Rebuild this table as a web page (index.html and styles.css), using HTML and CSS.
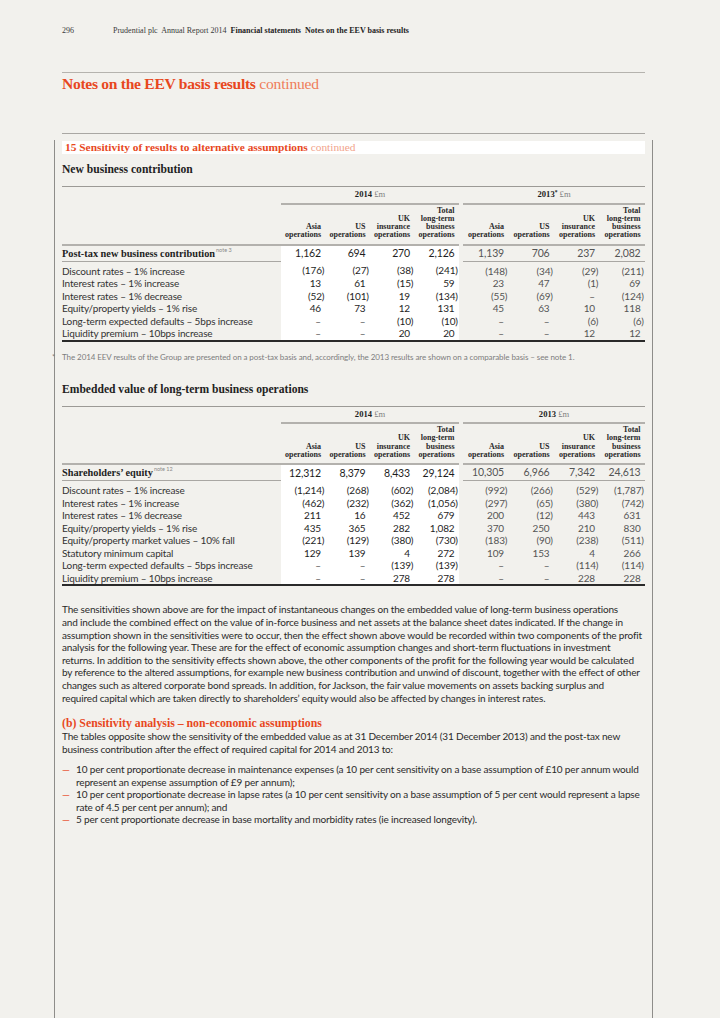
FILE: index.html
```html
<!DOCTYPE html>
<html lang="en">
<head>
<meta charset="utf-8">
<title>Notes on the EEV basis results continued</title>
<link rel="stylesheet" href="styles.css">
</head>
<body>
<div class="page">
  <div class="running-head">
    <span class="folio">296</span>
    <span class="rh-text">Prudential plc&nbsp; Annual Report 2014&nbsp; <b>Financial statements&nbsp; Notes on the EEV basis results</b></span>
  </div>
  <div class="rule-top"></div>
  <h1 class="page-title">Notes on the EEV basis results <span class="cont">continued</span></h1>
  <div class="section-rule"></div>

  <div class="section">
    <div class="sec-head">15&nbsp;Sensitivity of results to alternative assumptions <span class="cont">continued</span></div>

    <h2 class="tbl-title">New business contribution</h2>
    <table class="eev">
      <colgroup>
        <col class="lab"><col class="c14"><col class="c14"><col class="c14"><col class="c14"><col class="gap"><col class="c13"><col class="c13"><col class="c13"><col class="c13">
      </colgroup>
      <thead>
        <tr class="yr">
          <td></td>
          <td class="y" colspan="4"><b>2014</b> <span class="u">£m</span></td>
          <td class="gap"></td>
          <td class="y" colspan="4"><b>2013<sup class="ast">*</sup></b> <span class="u">£m</span></td>
        </tr>
        <tr class="hd">
          <th></th>
          <th>Asia<br>operations</th>
          <th>US<br>operations</th>
          <th>UK<br>insurance<br>operations</th>
          <th>Total<br>long-term<br>business<br>operations</th>
          <th class="gap"></th>
          <th>Asia<br>operations</th>
          <th>US<br>operations</th>
          <th>UK<br>insurance<br>operations</th>
          <th>Total<br>long-term<br>business<br>operations</th>
        </tr>
      </thead>
      <tbody>
        <tr class="main">
          <td class="l">Post-tax new business contribution<sup class="note">note 3</sup></td>
          <td>1,162</td><td>694</td><td>270</td><td>2,126</td><td class="gap"></td>
          <td>1,139</td><td>706</td><td>237</td><td>2,082</td>
        </tr>
        <tr class="first">
          <td class="l">Discount rates – 1% increase</td>
          <td class="n">(176)</td><td class="n">(27)</td><td class="n">(38)</td><td class="n">(241)</td><td class="gap"></td>
          <td class="n">(148)</td><td class="n">(34)</td><td class="n">(29)</td><td class="n">(211)</td>
        </tr>
        <tr>
          <td class="l">Interest rates – 1% increase</td>
          <td>13</td><td>61</td><td class="n">(15)</td><td>59</td><td class="gap"></td>
          <td>23</td><td>47</td><td class="n">(1)</td><td>69</td>
        </tr>
        <tr>
          <td class="l">Interest rates – 1% decrease</td>
          <td class="n">(52)</td><td class="n">(101)</td><td>19</td><td class="n">(134)</td><td class="gap"></td>
          <td class="n">(55)</td><td class="n">(69)</td><td class="d">–</td><td class="n">(124)</td>
        </tr>
        <tr>
          <td class="l">Equity/property yields – 1% rise</td>
          <td>46</td><td>73</td><td>12</td><td>131</td><td class="gap"></td>
          <td>45</td><td>63</td><td>10</td><td>118</td>
        </tr>
        <tr>
          <td class="l">Long-term expected defaults – 5bps increase</td>
          <td class="d">–</td><td class="d">–</td><td class="n">(10)</td><td class="n">(10)</td><td class="gap"></td>
          <td class="d">–</td><td class="d">–</td><td class="n">(6)</td><td class="n">(6)</td>
        </tr>
        <tr>
          <td class="l">Liquidity premium – 10bps increase</td>
          <td class="d">–</td><td class="d">–</td><td>20</td><td>20</td><td class="gap"></td>
          <td class="d">–</td><td class="d">–</td><td>12</td><td>12</td>
        </tr>
      </tbody>
    </table>

    <p class="footnote"><span class="fn-mark">*</span>The 2014 EEV results of the Group are presented on a post-tax basis and, accordingly, the 2013 results are shown on a comparable basis – see note 1.</p>

    <h2 class="tbl-title t2">Embedded value of long-term business operations</h2>
    <table class="eev">
      <colgroup>
        <col class="lab"><col class="c14"><col class="c14"><col class="c14"><col class="c14"><col class="gap"><col class="c13"><col class="c13"><col class="c13"><col class="c13">
      </colgroup>
      <thead>
        <tr class="yr">
          <td></td>
          <td class="y" colspan="4"><b>2014</b> <span class="u">£m</span></td>
          <td class="gap"></td>
          <td class="y" colspan="4"><b>2013</b> <span class="u">£m</span></td>
        </tr>
        <tr class="hd">
          <th></th>
          <th>Asia<br>operations</th>
          <th>US<br>operations</th>
          <th>UK<br>insurance<br>operations</th>
          <th>Total<br>long-term<br>business<br>operations</th>
          <th class="gap"></th>
          <th>Asia<br>operations</th>
          <th>US<br>operations</th>
          <th>UK<br>insurance<br>operations</th>
          <th>Total<br>long-term<br>business<br>operations</th>
        </tr>
      </thead>
      <tbody>
        <tr class="main">
          <td class="l">Shareholders’ equity<sup class="note">note 12</sup></td>
          <td>12,312</td><td>8,379</td><td>8,433</td><td>29,124</td><td class="gap"></td>
          <td>10,305</td><td>6,966</td><td>7,342</td><td>24,613</td>
        </tr>
        <tr class="first">
          <td class="l">Discount rates – 1% increase</td>
          <td class="n">(1,214)</td><td class="n">(268)</td><td class="n">(602)</td><td class="n">(2,084)</td><td class="gap"></td>
          <td class="n">(992)</td><td class="n">(266)</td><td class="n">(529)</td><td class="n">(1,787)</td>
        </tr>
        <tr>
          <td class="l">Interest rates – 1% increase</td>
          <td class="n">(462)</td><td class="n">(232)</td><td class="n">(362)</td><td class="n">(1,056)</td><td class="gap"></td>
          <td class="n">(297)</td><td class="n">(65)</td><td class="n">(380)</td><td class="n">(742)</td>
        </tr>
        <tr>
          <td class="l">Interest rates – 1% decrease</td>
          <td>211</td><td>16</td><td>452</td><td>679</td><td class="gap"></td>
          <td>200</td><td class="n">(12)</td><td>443</td><td>631</td>
        </tr>
        <tr>
          <td class="l">Equity/property yields – 1% rise</td>
          <td>435</td><td>365</td><td>282</td><td>1,082</td><td class="gap"></td>
          <td>370</td><td>250</td><td>210</td><td>830</td>
        </tr>
        <tr>
          <td class="l">Equity/property market values – 10% fall</td>
          <td class="n">(221)</td><td class="n">(129)</td><td class="n">(380)</td><td class="n">(730)</td><td class="gap"></td>
          <td class="n">(183)</td><td class="n">(90)</td><td class="n">(238)</td><td class="n">(511)</td>
        </tr>
        <tr>
          <td class="l">Statutory minimum capital</td>
          <td>129</td><td>139</td><td>4</td><td>272</td><td class="gap"></td>
          <td>109</td><td>153</td><td>4</td><td>266</td>
        </tr>
        <tr>
          <td class="l">Long-term expected defaults – 5bps increase</td>
          <td class="d">–</td><td class="d">–</td><td class="n">(139)</td><td class="n">(139)</td><td class="gap"></td>
          <td class="d">–</td><td class="d">–</td><td class="n">(114)</td><td class="n">(114)</td>
        </tr>
        <tr>
          <td class="l">Liquidity premium – 10bps increase</td>
          <td class="d">–</td><td class="d">–</td><td>278</td><td>278</td><td class="gap"></td>
          <td class="d">–</td><td class="d">–</td><td>228</td><td>228</td>
        </tr>
      </tbody>
    </table>

    <p class="body-text first-para">The sensitivities shown above are for the impact of instantaneous changes on the embedded value of long-term business operations<br>
and include the combined effect on the value of in-force business and net assets at the balance sheet dates indicated. If the change in<br>
assumption shown in the sensitivities were to occur, then the effect shown above would be recorded within two components of the profit<br>
analysis for the following year. These are for the effect of economic assumption changes and short-term fluctuations in investment<br>
returns. In addition to the sensitivity effects shown above, the other components of the profit for the following year would be calculated<br>
by reference to the altered assumptions, for example new business contribution and unwind of discount, together with the effect of other<br>
changes such as altered corporate bond spreads. In addition, for Jackson, the fair value movements on assets backing surplus and<br>
required capital which are taken directly to shareholders’ equity would also be affected by changes in interest rates.</p>

    <h3 class="sub-head">(b) Sensitivity analysis – non-economic assumptions</h3>
    <p class="body-text">The tables opposite show the sensitivity of the embedded value as at 31 December 2014 (31 December 2013) and the post-tax new<br>
business contribution after the effect of required capital for 2014 and 2013 to:</p>

    <ul class="dash-list">
      <li>10 per cent proportionate decrease in maintenance expenses (a 10 per cent sensitivity on a base assumption of £10 per annum would<br>represent an expense assumption of £9 per annum);</li>
      <li>10 per cent proportionate decrease in lapse rates (a 10 per cent sensitivity on a base assumption of 5 per cent would represent a lapse<br>rate of 4.5 per cent per annum); and</li>
      <li>5 per cent proportionate decrease in base mortality and morbidity rates (ie increased longevity).</li>
    </ul>
  </div>
</div>
</body>
</html>
```
FILE: styles.css
```css
* { box-sizing: border-box; }
html, body { margin: 0; padding: 0; }
body {
  background: #f2f1ed;
  width: 720px;
  height: 1018px;
  overflow: hidden;
  color: #2a2a2a;
  font-family: Lato, "Open Sans", sans-serif;
}
.page { padding-left: 62px; width: 720px; height: 1018px; }

.running-head {
  display: flex;
  font-family: "Liberation Serif", serif;
  font-size: 8px;
  line-height: 9px;
  padding-top: 26px;
  color: #3a3a3a;
}
.folio { width: 51px; }
.running-head b { color: #1e1e1e; }

.rule-top { width: 583px; border-top: 1.5px solid #b5b3ae; margin-top: 37px; }

.page-title {
  font-family: "Liberation Serif", serif;
  font-weight: bold;
  font-size: 15.6px;
  line-height: 20px;
  letter-spacing: -0.3px;
  color: #e8481e;
  margin: 1px 0 0;
}
.page-title .cont { font-weight: normal; color: #ef7d59; letter-spacing: -0.2px; }

.section-rule { width: 583px; border-top: 1.5px solid #a9a7a3; margin-top: 39px; }

.section {
  margin-left: -8px;
  margin-top: 6px;
  width: 599px;
  height: 900px;
  border-left: 1px solid #8e8d8a;
  border-right: 1px solid #8e8d8a;
  padding: 1px 7px 0;
}

.sec-head {
  background: #fff;
  height: 13px;
  line-height: 13px;
  padding-left: 3px;
  font-family: "Liberation Serif", serif;
  font-weight: bold;
  font-size: 11.4px;
  color: #e8481e;
}
.sec-head .cont { font-weight: normal; color: #f2a48b; }

.tbl-title {
  font-family: "Liberation Serif", serif;
  font-weight: bold;
  font-size: 11.6px;
  line-height: 14px;
  color: #222;
  margin: 9px 0 9px;
}
.tbl-title.t2 { margin-top: 21px; }

.eev {
  border-collapse: collapse;
  table-layout: fixed;
  width: 583px;
  border-top: 1px solid #9c9a96;
  border-bottom: 2px solid #2a2a2a;
}
.eev col.lab { width: 219px; }
.eev col.c14 { width: 44.5px; }
.eev col.gap { width: 4px; }
.eev col.c13 { width: 45.5px; }

.eev .yr td {
  height: 17px;
  padding: 0;
  text-align: center;
  vertical-align: middle;
  font-family: "Liberation Serif", serif;
  font-size: 8.6px;
  line-height: 9px;
}
.eev .yr td.y { border-bottom: 2px solid #b3b1ad; }
.eev .yr b { color: #1e1e1e; }
.eev .yr .u { color: #808080; }
.eev .ast { font-size: 5.5px; vertical-align: top; line-height: 5px; }

.eev .hd th {
  font-family: "Liberation Serif", serif;
  font-weight: bold;
  font-size: 8px;
  line-height: 8.3px;
  text-align: right;
  vertical-align: bottom;
  padding: 2px 4.5px 4px 0;
  border-bottom: 2px solid #b3b1ad;
  color: #2a2a2a;
  white-space: nowrap;
}
.eev .hd th.gap { border-bottom: none; padding: 0; }
.eev td.gap { padding: 0; }

.eev tbody td {
  font-size: 10px;
  letter-spacing: -0.15px;
  line-height: 12.5px;
  padding: 0 4.5px 0 0;
  text-align: right;
  white-space: nowrap;
  color: #1e1e1e;
}
.eev tbody td:nth-child(n+2):nth-child(-n+5) { background: #fff; }
.eev tbody td:nth-child(n+7) { color: #555; }
.eev tbody td.l { text-align: left; padding-right: 0; color: #333; }
.eev tbody td.n { padding-right: 1.2px; }
.eev tbody td.d { padding-right: 4.5px; color: #555; }
.eev tr.first td { padding-top: 3px; }
.eev tr.main td {
  line-height: 15px;
  font-size: 10.5px;
  border-bottom: 1px solid #a9a7a3;
}
.eev tr.main td:nth-child(n+2):nth-child(-n+5) { border-bottom: none; }
.eev tr.main td.gap { border-bottom: none; }
.eev tr.main td.l {
  font-family: "Liberation Serif", serif;
  font-weight: bold;
  font-size: 10.3px;
  letter-spacing: 0;
  color: #1e1e1e;
}
.note {
  font-family: Lato, sans-serif;
  font-weight: normal;
  font-size: 5.5px;
  color: #8a8a8a;
  vertical-align: top;
  line-height: 8px;
  margin-left: 1px;
}

.footnote {
  font-size: 8px;
  letter-spacing: -0.08px;
  line-height: 9px;
  color: #7d7d7d;
  margin: 11px 0 0;
}
.fn-mark { display: inline-block; width: 10px; margin-left: -10px; }

.body-text {
  font-size: 10px;
  letter-spacing: -0.16px;
  line-height: 12.6px;
  color: #2a2a2a;
  margin: 0;
  white-space: nowrap;
}
.first-para { margin-top: 17px; }

.sub-head {
  font-family: "Liberation Serif", serif;
  font-weight: bold;
  font-size: 11.8px;
  line-height: 13px;
  color: #e8481e;
  margin: 13px 0 0;
}

.dash-list {
  list-style: none;
  margin: 8px 0 0;
  padding: 0;
  font-size: 10px;
  letter-spacing: -0.16px;
  line-height: 12.4px;
  color: #2a2a2a;
  white-space: nowrap;
}
.dash-list li { position: relative; padding-left: 14px; }
.dash-list li::before {
  content: "—";
  position: absolute;
  left: 0;
  top: 0;
  color: #e8481e;
}
```
